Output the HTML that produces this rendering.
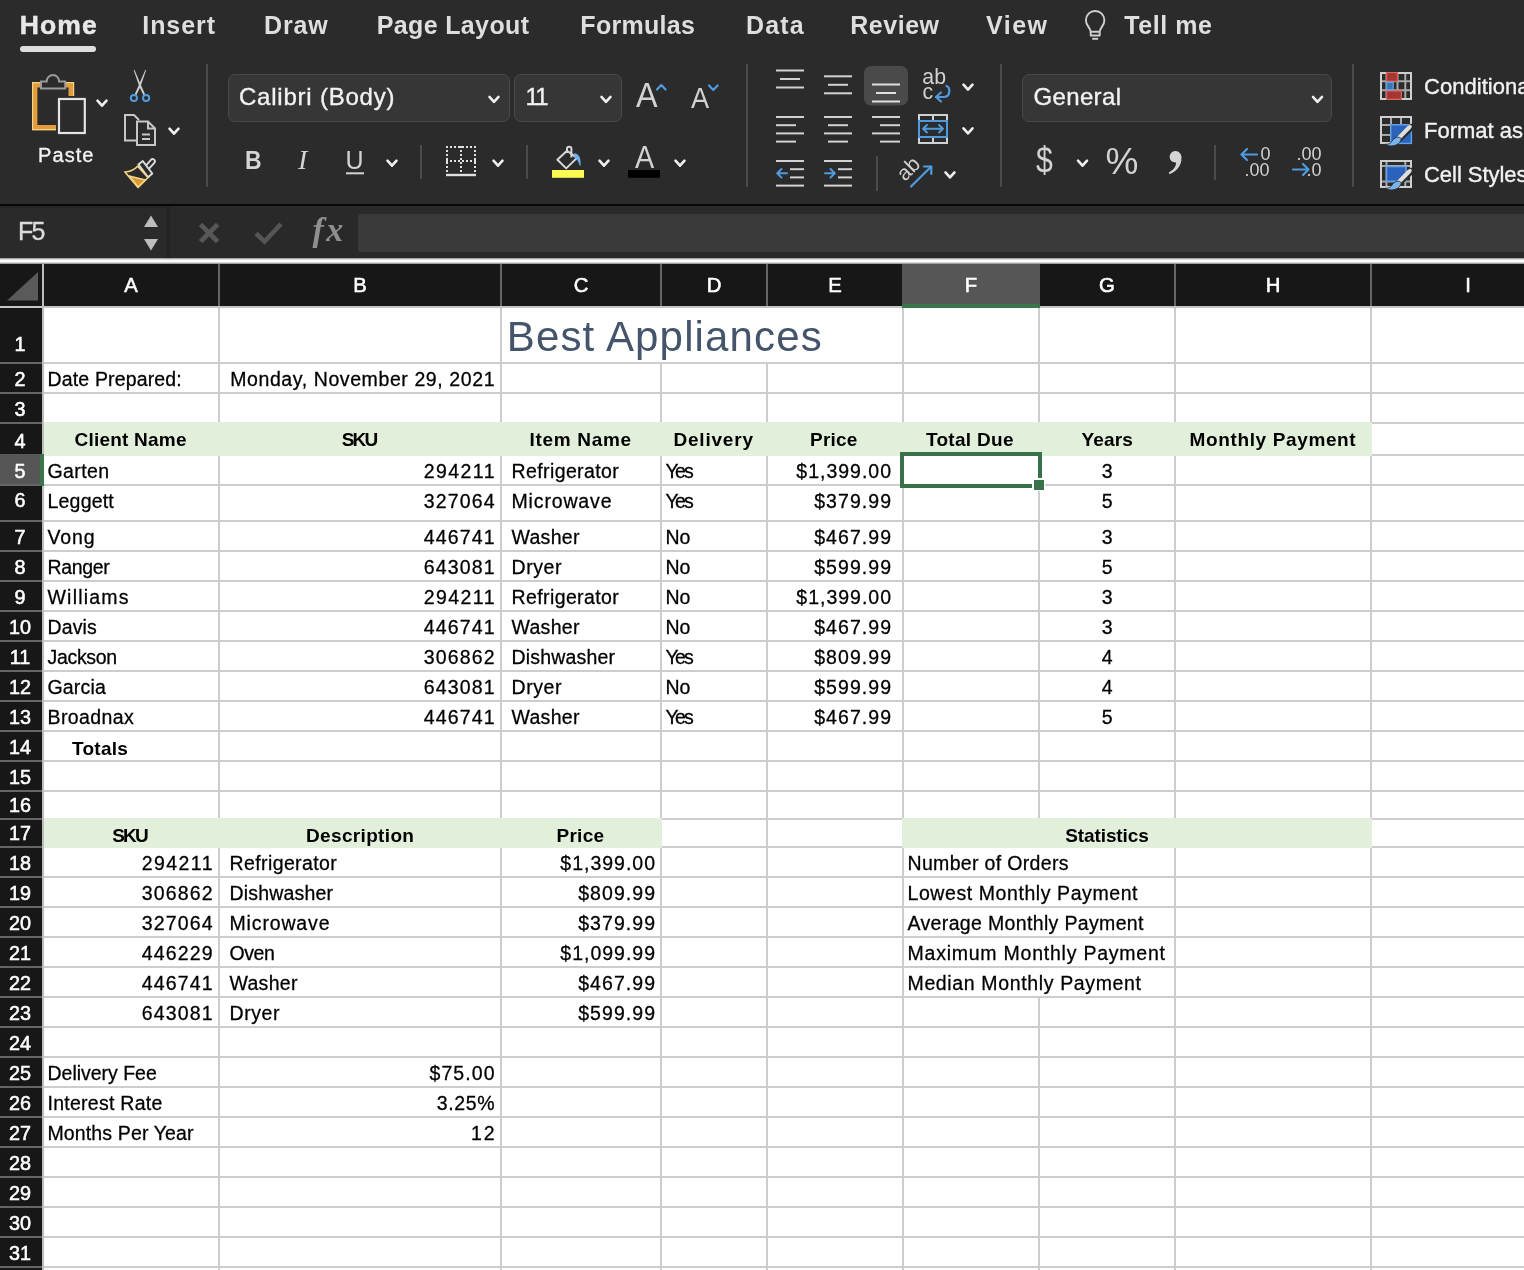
<!DOCTYPE html>
<html lang="en"><head><meta charset="utf-8"><title>Excel</title>
<style>
html,body{margin:0;padding:0;background:#2b2b2b;}
html{overflow:hidden;width:1524px;height:1270px;}
body{width:1524px;height:1270px;overflow:hidden;position:relative;will-change:transform;font-family:"Liberation Sans",sans-serif;}
.b{position:absolute;}
.t{position:absolute;white-space:pre;line-height:1;color:#000;font-family:"Liberation Sans",sans-serif;}
.c{-webkit-text-stroke:0.28px #000;}
.cb{font-weight:bold;}
.title{color:#44546a;}
.h{color:#fff;-webkit-text-stroke:0.55px #fff;}
.tab{color:#dedede;font-weight:bold;}
.ui{color:#f2f2f2;-webkit-text-stroke:0.35px currentColor;}
.ic{color:#d2d2d2;}
.uib{color:#d4d4d4;font-weight:bold;}
.ser{font-family:"Liberation Serif",serif;font-style:italic;}
</style></head><body>
<div class="b" style="left:0;top:0;width:1524px;height:204px;background:#2b2b2b"></div>
<div class="b" style="left:0;top:204px;width:1524px;height:2.3px;background:#080808"></div>
<div class="b" style="left:0;top:206.3px;width:1524px;height:52px;background:#292929"></div>
<div class="b" style="left:0;top:206.3px;width:170px;height:2px;background:#252525"></div>
<div class="b" style="left:0;top:208.3px;width:166px;height:50px;background:#2a2a2a"></div>
<div class="b" style="left:166px;top:206.3px;width:4px;height:52px;background:#242424"></div>
<div class="b" style="left:358px;top:214px;width:1166px;height:38px;background:#3a3a3a;border-radius:2.5px 0 0 2.5px"></div>
<div class="b" style="left:0;top:257.5px;width:1524px;height:6.5px;background:linear-gradient(#7a7a7a 0,#d0d0d0 18%,#fdfdfd 42%,#f4f4f4 66%,#b4b4b4 88%,#6c6c6c 100%)"></div>
<div class="b" style="left:20px;top:46px;width:76px;height:5.5px;border-radius:3px;background:#dedede"></div>
<div class="b" style="left:228.0px;top:74.3px;width:281.7px;height:47.4px;box-sizing:border-box;background:#363636;border:1.5px solid #4a4a4a;border-radius:7px"></div>
<div class="b" style="left:514.3px;top:74.3px;width:107.5px;height:47.4px;box-sizing:border-box;background:#363636;border:1.5px solid #4a4a4a;border-radius:7px"></div>
<div class="b" style="left:1022.0px;top:74.3px;width:310.0px;height:47.4px;box-sizing:border-box;background:#363636;border:1.5px solid #4a4a4a;border-radius:7px"></div>
<svg class="b" style="left:0;top:0" width="1524" height="264" viewBox="0 0 1524 264">
<path d="M207 64V187" stroke="#4b4b4b" stroke-width="2"/>
<path d="M747 64V187" stroke="#4b4b4b" stroke-width="2"/>
<path d="M1001 64V187" stroke="#4b4b4b" stroke-width="2"/>
<path d="M1353 64V187" stroke="#4b4b4b" stroke-width="2"/>
<path d="M421 145V179" stroke="#4b4b4b" stroke-width="2"/>
<path d="M527 145V179" stroke="#4b4b4b" stroke-width="2"/>
<path d="M877 156V191" stroke="#4b4b4b" stroke-width="2"/>
<path d="M1215 145V180" stroke="#4b4b4b" stroke-width="2"/>
<path d="M97.50 100.70 l4.50 5.00 l4.50 -5.00" fill="none" stroke="#f0f0f0" stroke-width="2.60" stroke-linecap="round" stroke-linejoin="round"/>
<path d="M169.50 128.60 l4.50 5.00 l4.50 -5.00" fill="none" stroke="#f0f0f0" stroke-width="2.60" stroke-linecap="round" stroke-linejoin="round"/>
<path d="M489.50 96.90 l4.50 5.00 l4.50 -5.00" fill="none" stroke="#f0f0f0" stroke-width="2.60" stroke-linecap="round" stroke-linejoin="round"/>
<path d="M601.50 96.90 l4.50 5.00 l4.50 -5.00" fill="none" stroke="#f0f0f0" stroke-width="2.60" stroke-linecap="round" stroke-linejoin="round"/>
<path d="M387.50 160.70 l4.50 5.00 l4.50 -5.00" fill="none" stroke="#f0f0f0" stroke-width="2.60" stroke-linecap="round" stroke-linejoin="round"/>
<path d="M493.50 160.70 l4.50 5.00 l4.50 -5.00" fill="none" stroke="#f0f0f0" stroke-width="2.60" stroke-linecap="round" stroke-linejoin="round"/>
<path d="M599.50 160.70 l4.50 5.00 l4.50 -5.00" fill="none" stroke="#f0f0f0" stroke-width="2.60" stroke-linecap="round" stroke-linejoin="round"/>
<path d="M675.50 160.70 l4.50 5.00 l4.50 -5.00" fill="none" stroke="#f0f0f0" stroke-width="2.60" stroke-linecap="round" stroke-linejoin="round"/>
<path d="M963.50 84.60 l4.50 5.00 l4.50 -5.00" fill="none" stroke="#f0f0f0" stroke-width="2.60" stroke-linecap="round" stroke-linejoin="round"/>
<path d="M963.50 128.30 l4.50 5.00 l4.50 -5.00" fill="none" stroke="#f0f0f0" stroke-width="2.60" stroke-linecap="round" stroke-linejoin="round"/>
<path d="M945.50 172.40 l4.50 5.00 l4.50 -5.00" fill="none" stroke="#f0f0f0" stroke-width="2.60" stroke-linecap="round" stroke-linejoin="round"/>
<path d="M1078.00 160.70 l4.50 5.00 l4.50 -5.00" fill="none" stroke="#f0f0f0" stroke-width="2.60" stroke-linecap="round" stroke-linejoin="round"/>
<path d="M1313.00 96.90 l4.50 5.00 l4.50 -5.00" fill="none" stroke="#f0f0f0" stroke-width="2.60" stroke-linecap="round" stroke-linejoin="round"/>
<g fill="none" stroke="#d0d0d0" stroke-width="1.9" stroke-linejoin="round"><path d="M1090.7 31.8 C1090.7 27.6 1085.9 26.2 1085.9 20.2 A9.25 9.25 0 0 1 1104.4 20.2 C1104.4 26.2 1099.7 27.6 1099.7 31.8 Z"/><path d="M1090.7 31.8 V35.5 H1099.7 V31.8"/><path d="M1092.2 38.8 H1098.1" stroke-width="2"/></g>
<g><path d="M44 84.7H34.7V127.6H56" fill="none" stroke="#e39c3b" stroke-width="5.4"/><path d="M62 84.7H71.2V96" fill="none" stroke="#e39c3b" stroke-width="5.4"/><path d="M44 82.6H32.6V129.7H56M62 82.6H73.6V96" fill="none" stroke="#f6d487" stroke-width="1.2"/><path d="M41 88.6V81.6H46.7 A6.2 6.6 0 0 1 59.1 81.6H65.2V88.6Z" fill="#2b2b2b" stroke="#9a9a9a" stroke-width="2"/><rect x="59" y="99" width="25.8" height="34" fill="#2b2b2b" stroke="#e4e4e4" stroke-width="2.2"/></g>
<g><path d="M133.7 70.2 L134.6 70 L141.6 86.5 L145.2 94.6 L143.6 95.4 L139.4 86.8 Z" fill="#cdcdcd"/><path d="M146.1 70.2 L145.2 70 L138.2 86.5 L134.6 94.6 L136.2 95.4 L140.4 86.8 Z" fill="#cdcdcd"/><circle cx="133.9" cy="98" r="3.1" fill="none" stroke="#4f9be0" stroke-width="2"/><circle cx="146.1" cy="98" r="3.1" fill="none" stroke="#4f9be0" stroke-width="2"/></g>
<g fill="none" stroke="#c8c8c8" stroke-width="2" stroke-linejoin="miter"><path d="M136 140.5H125V115H134L139 120"/><path d="M137 121.5H148L155 128.5V145H137Z" fill="#2b2b2b"/><path d="M148 121.5V128.5H155"/><path d="M142 134.5H150M142 139H150" stroke-width="1.8"/></g>
<g stroke-linejoin="round"><path d="M147.6 167 L152.6 161.3" stroke="#dcdcdc" stroke-width="6.4" stroke-linecap="round" fill="none"/><path d="M147.6 167 L152.6 161.3" stroke="#2b2b2b" stroke-width="2.6" stroke-linecap="round" fill="none"/><path d="M138.4 164.4 L142.8 161.1 L152.3 173.5 L148.1 177.3 Z" fill="#2b2b2b" stroke="#dcdcdc" stroke-width="1.9"/><path d="M124.9 172 Q133 171.3 137.6 166.2 L148 177.5 L138.1 187.4 Z" fill="#2b2b2b" stroke="#f4d486" stroke-width="1.7"/><path d="M129.2 176 L145.4 180 L138.1 187 Z" fill="#df9636" stroke="#f4d486" stroke-width="1.5"/></g>
<path d="M657 89.5 l4.3 -4.5 l4.3 4.5" fill="none" stroke="#4f9be0" stroke-width="2.2" stroke-linecap="round" stroke-linejoin="round"/>
<path d="M709 85.5 l4.3 4.5 l4.3 -4.5" fill="none" stroke="#4f9be0" stroke-width="2.2" stroke-linecap="round" stroke-linejoin="round"/>
<path d="M346.00 173.30H364.00" stroke="#d4d4d4" stroke-width="2.00" fill="none"/>
<g fill="none" stroke="#e0e0e0" stroke-width="2"><path d="M446 147H476M446 161H476" stroke-dasharray="2 2"/><path d="M447 146V174M461 146V174M475 146V174" stroke-dasharray="2 2"/><path d="M446 175H476" stroke-width="2.4"/></g>
<g fill="none" stroke="#d8d8d8" stroke-width="2" stroke-linejoin="round"><path d="M567 150.8 L557.4 159.8 L566.2 168.4 L577 157.9 Z"/><path d="M567 153 V148.6 Q567 146.7 569.2 146.7 Q571.4 146.7 571.4 148.6 V157.6"/></g><path d="M574.6 153.6 Q580.8 154.2 580.2 165.4 Q578.4 159.6 574.8 157.6 Z" fill="#6eb0ee" stroke="#6eb0ee" stroke-width="0.8"/>
<rect x="552" y="170" width="32" height="7.8" fill="#fbfb52"/>
<rect x="628" y="170" width="32" height="7.8" fill="#000"/>
<path d="M776.00 70.50H804.00" stroke="#d2d2d2" stroke-width="2.00" fill="none"/><path d="M780.00 79.00H800.00" stroke="#d2d2d2" stroke-width="2.00" fill="none"/><path d="M776.00 87.50H804.00" stroke="#d2d2d2" stroke-width="2.00" fill="none"/>
<path d="M824.00 76.30H852.00" stroke="#d2d2d2" stroke-width="2.00" fill="none"/><path d="M828.00 84.80H848.00" stroke="#d2d2d2" stroke-width="2.00" fill="none"/><path d="M824.00 93.30H852.00" stroke="#d2d2d2" stroke-width="2.00" fill="none"/>
<rect x="864" y="66" width="44" height="39.5" rx="7" fill="#4a4a4a"/>
<path d="M872.00 84.50H900.00" stroke="#e0e0e0" stroke-width="2.00" fill="none"/><path d="M876.00 93.00H896.00" stroke="#e0e0e0" stroke-width="2.00" fill="none"/><path d="M872.00 101.50H900.00" stroke="#e0e0e0" stroke-width="2.00" fill="none"/>
<path d="M776.00 117.00H804.00" stroke="#d2d2d2" stroke-width="2.00" fill="none"/><path d="M776.00 125.20H796.00" stroke="#d2d2d2" stroke-width="2.00" fill="none"/><path d="M776.00 133.40H804.00" stroke="#d2d2d2" stroke-width="2.00" fill="none"/><path d="M776.00 141.60H796.00" stroke="#d2d2d2" stroke-width="2.00" fill="none"/>
<path d="M824.00 117.00H852.00" stroke="#d2d2d2" stroke-width="2.00" fill="none"/><path d="M828.00 125.20H848.00" stroke="#d2d2d2" stroke-width="2.00" fill="none"/><path d="M824.00 133.40H852.00" stroke="#d2d2d2" stroke-width="2.00" fill="none"/><path d="M828.00 141.60H848.00" stroke="#d2d2d2" stroke-width="2.00" fill="none"/>
<path d="M872.00 117.00H900.00" stroke="#d2d2d2" stroke-width="2.00" fill="none"/><path d="M880.00 125.20H900.00" stroke="#d2d2d2" stroke-width="2.00" fill="none"/><path d="M872.00 133.40H900.00" stroke="#d2d2d2" stroke-width="2.00" fill="none"/><path d="M880.00 141.60H900.00" stroke="#d2d2d2" stroke-width="2.00" fill="none"/>
<path d="M776.00 161.00H804.00" stroke="#d2d2d2" stroke-width="2.00" fill="none"/><path d="M790.00 169.20H804.00" stroke="#d2d2d2" stroke-width="2.00" fill="none"/><path d="M790.00 177.40H804.00" stroke="#d2d2d2" stroke-width="2.00" fill="none"/><path d="M776.00 185.60H804.00" stroke="#d2d2d2" stroke-width="2.00" fill="none"/>
<path d="M824.00 161.00H852.00" stroke="#d2d2d2" stroke-width="2.00" fill="none"/><path d="M838.00 169.20H852.00" stroke="#d2d2d2" stroke-width="2.00" fill="none"/><path d="M838.00 177.40H852.00" stroke="#d2d2d2" stroke-width="2.00" fill="none"/><path d="M824.00 185.60H852.00" stroke="#d2d2d2" stroke-width="2.00" fill="none"/>
<g fill="none" stroke="#4f9be0" stroke-width="2" stroke-linecap="round" stroke-linejoin="round"><path d="M777.5 173.3H787M781.5 169l-4.3 4.3l4.3 4.3"/><path d="M825 173.3H834.5M830.5 169l4.3 4.3l-4.3 4.3"/></g>
<g fill="none" stroke="#4f9be0" stroke-width="2.2" stroke-linecap="round" stroke-linejoin="round"><path d="M946.5 86 C951 88 950 97 944 97 H936"/><path d="M941 92.5 l-5 4.5 l5 4.5"/></g>
<g fill="none" stroke-width="2"><path d="M919 115H947V143H919Z M933 115V121 M933 137V143" stroke="#d2d2d2"/><rect x="919" y="121" width="28" height="16" stroke="#4f9be0"/><path d="M923 128.7H943M927 125l-4 3.7l4 3.7M939 125l4 3.7l-4 3.7" stroke="#4f9be0" stroke-linecap="round" stroke-linejoin="round"/></g>
<g fill="none" stroke="#4f9be0" stroke-width="2.2" stroke-linecap="round" stroke-linejoin="round"><path d="M911 186.5 L931 166.7"/><path d="M924 166.5 H931.3 V174"/></g>
<g fill="none" stroke="#4f9be0" stroke-width="2.2" stroke-linecap="round" stroke-linejoin="round"><path d="M1241.5 154.5H1257M1247 149l-5.5 5.5l5.5 5.5"/><path d="M1293 169.5H1308.5M1303 164l5.5 5.5l-5.5 5.5"/></g>
<path d="M1175.5 151 a5.8 5.8 0 1 1 -0.1 0 Z" fill="#d4d4d4"/><path d="M1180.8 154 C1183.5 163 1178 171 1169.5 174.2 L1168.8 172.5 C1174 169.5 1176.5 166 1176 161.5 Z" fill="#d4d4d4"/>
<g fill="none" stroke-width="2"><path d="M1386.5 72.0V100.0M1397.5 72.0V100.0M1405.3 72.0V100.0M1380 81.3H1412M1380 90.3H1412" stroke="#a9a9a9"/><rect x="1381" y="73.0" width="30" height="26" stroke="#cfcfcf"/></g>
<rect x="1386.6" y="72.6" width="10.8" height="8.6" fill="#a63431" stroke="#d8645e" stroke-width="1.2"/><rect x="1386.6" y="90.9" width="14.8" height="8.4" fill="#a63431" stroke="#d8645e" stroke-width="1.2"/><rect x="1386.6" y="82.4" width="6.6" height="7.3" fill="#3b74b8" stroke="#64a6e6" stroke-width="1.2"/>
<g fill="none" stroke-width="2"><path d="M1391.0 116.0V144.0M1401.0 116.0V144.0M1380 125.0H1412M1380 135.0H1412" stroke="#a9a9a9"/><rect x="1381" y="117.0" width="30" height="26" stroke="#cfcfcf"/></g>
<rect x="1390.8" y="124.8" width="20.6" height="18.6" fill="#2b62bb" stroke="#5fa3e8" stroke-width="1.4"/>
<path d="M1411.6 127.0 L1398.5 139.5" stroke="#2b2b2b" stroke-width="6.2" stroke-linecap="round"/><path d="M1411.2 125.6 Q1412.2 127.0 1410 129.2 L1399.6 139.8 L1396.8 137.5 L1407.5 126.4 Q1410.3 124.6 1411.2 125.6 Z" fill="#dedede" stroke="#f4f4f4" stroke-width="0.6"/><path d="M1399.5 137.3 C1397 136.7 1393.5 138.2 1392 141.0 C1390.5 143.8 1388 144.6 1385.3 144.2 C1390 147.4 1398.5 146.0 1400.6 140.8 C1401.6 139.0 1401 137.8 1399.5 137.3 Z" fill="#79b4ee" stroke="#2b2b2b" stroke-width="0.8"/>
<g fill="none" stroke-width="2"><path d="M1386.5 160.0V188.0M1405.3 160.0V188.0M1380 166.0H1412M1380 181.5H1412" stroke="#a9a9a9"/><rect x="1381" y="161.0" width="30" height="26" stroke="#cfcfcf"/></g>
<rect x="1386.6" y="166.6" width="19.4" height="14.6" fill="#2b62bb" stroke="#5fa3e8" stroke-width="1.4"/>
<path d="M1411.6 171.0 L1398.5 183.5" stroke="#2b2b2b" stroke-width="6.2" stroke-linecap="round"/><path d="M1411.2 169.6 Q1412.2 171.0 1410 173.2 L1399.6 183.8 L1396.8 181.5 L1407.5 170.4 Q1410.3 168.6 1411.2 169.6 Z" fill="#dedede" stroke="#f4f4f4" stroke-width="0.6"/><path d="M1399.5 181.3 C1397 180.7 1393.5 182.2 1392 185.0 C1390.5 187.8 1388 188.6 1385.3 188.2 C1390 191.4 1398.5 190.0 1400.6 184.8 C1401.6 183.0 1401 181.8 1399.5 181.3 Z" fill="#79b4ee" stroke="#2b2b2b" stroke-width="0.8"/>
<path d="M151 215.5 L158 227 H144 Z" fill="#bdbdbd"/><path d="M151 250.5 L158 239 H144 Z" fill="#bdbdbd"/>
<path d="M200.6 224.4 L217.6 241.6 M217.6 224.4 L200.6 241.6" stroke="#575757" stroke-width="4.9" fill="none"/>
<path d="M256 233.5 L264.5 241.5 L281 224" stroke="#555" stroke-width="4.6" fill="none"/>
</svg>
<div class="b" style="left:44px;top:308px;width:1480px;height:962px;background:#fff"></div>
<div class="b" style="left:0;top:264px;width:1524px;height:42px;background:#171717"></div>
<div class="b" style="left:0;top:306px;width:42px;height:964px;background:#171717"></div>
<div class="b" style="left:0;top:305.5px;width:1524px;height:2px;background:#c4c4c4"></div>
<div class="b" style="left:42px;top:264px;width:2px;height:1006px;background:#bdbdbd"></div>
<div class="b" style="left:218px;top:308px;width:2px;height:962px;background:#cdcdcd"></div>
<div class="b" style="left:218px;top:264px;width:2px;height:42px;background:#666666"></div>
<div class="b" style="left:500px;top:308px;width:2px;height:962px;background:#cdcdcd"></div>
<div class="b" style="left:500px;top:264px;width:2px;height:42px;background:#666666"></div>
<div class="b" style="left:660px;top:308px;width:2px;height:962px;background:#cdcdcd"></div>
<div class="b" style="left:660px;top:264px;width:2px;height:42px;background:#666666"></div>
<div class="b" style="left:766px;top:308px;width:2px;height:962px;background:#cdcdcd"></div>
<div class="b" style="left:766px;top:264px;width:2px;height:42px;background:#666666"></div>
<div class="b" style="left:902px;top:308px;width:2px;height:962px;background:#cdcdcd"></div>
<div class="b" style="left:902px;top:264px;width:2px;height:42px;background:#666666"></div>
<div class="b" style="left:1038px;top:308px;width:2px;height:962px;background:#cdcdcd"></div>
<div class="b" style="left:1038px;top:264px;width:2px;height:42px;background:#666666"></div>
<div class="b" style="left:1174px;top:308px;width:2px;height:962px;background:#cdcdcd"></div>
<div class="b" style="left:1174px;top:264px;width:2px;height:42px;background:#666666"></div>
<div class="b" style="left:1370px;top:308px;width:2px;height:962px;background:#cdcdcd"></div>
<div class="b" style="left:1370px;top:264px;width:2px;height:42px;background:#666666"></div>
<div class="b" style="left:44px;top:362px;width:1480px;height:2px;background:#cdcdcd"></div>
<div class="b" style="left:0;top:362px;width:42px;height:2px;background:#666666"></div>
<div class="b" style="left:44px;top:392px;width:1480px;height:2px;background:#cdcdcd"></div>
<div class="b" style="left:0;top:392px;width:42px;height:2px;background:#666666"></div>
<div class="b" style="left:44px;top:422px;width:1480px;height:2px;background:#cdcdcd"></div>
<div class="b" style="left:0;top:422px;width:42px;height:2px;background:#666666"></div>
<div class="b" style="left:44px;top:454px;width:1480px;height:2px;background:#cdcdcd"></div>
<div class="b" style="left:0;top:454px;width:42px;height:2px;background:#666666"></div>
<div class="b" style="left:44px;top:484px;width:1480px;height:2px;background:#cdcdcd"></div>
<div class="b" style="left:0;top:484px;width:42px;height:2px;background:#666666"></div>
<div class="b" style="left:44px;top:520px;width:1480px;height:2px;background:#cdcdcd"></div>
<div class="b" style="left:0;top:520px;width:42px;height:2px;background:#666666"></div>
<div class="b" style="left:44px;top:550px;width:1480px;height:2px;background:#cdcdcd"></div>
<div class="b" style="left:0;top:550px;width:42px;height:2px;background:#666666"></div>
<div class="b" style="left:44px;top:580px;width:1480px;height:2px;background:#cdcdcd"></div>
<div class="b" style="left:0;top:580px;width:42px;height:2px;background:#666666"></div>
<div class="b" style="left:44px;top:610px;width:1480px;height:2px;background:#cdcdcd"></div>
<div class="b" style="left:0;top:610px;width:42px;height:2px;background:#666666"></div>
<div class="b" style="left:44px;top:640px;width:1480px;height:2px;background:#cdcdcd"></div>
<div class="b" style="left:0;top:640px;width:42px;height:2px;background:#666666"></div>
<div class="b" style="left:44px;top:670px;width:1480px;height:2px;background:#cdcdcd"></div>
<div class="b" style="left:0;top:670px;width:42px;height:2px;background:#666666"></div>
<div class="b" style="left:44px;top:700px;width:1480px;height:2px;background:#cdcdcd"></div>
<div class="b" style="left:0;top:700px;width:42px;height:2px;background:#666666"></div>
<div class="b" style="left:44px;top:730px;width:1480px;height:2px;background:#cdcdcd"></div>
<div class="b" style="left:0;top:730px;width:42px;height:2px;background:#666666"></div>
<div class="b" style="left:44px;top:760px;width:1480px;height:2px;background:#cdcdcd"></div>
<div class="b" style="left:0;top:760px;width:42px;height:2px;background:#666666"></div>
<div class="b" style="left:44px;top:790px;width:1480px;height:2px;background:#cdcdcd"></div>
<div class="b" style="left:0;top:790px;width:42px;height:2px;background:#666666"></div>
<div class="b" style="left:44px;top:818px;width:1480px;height:2px;background:#cdcdcd"></div>
<div class="b" style="left:0;top:818px;width:42px;height:2px;background:#666666"></div>
<div class="b" style="left:44px;top:846px;width:1480px;height:2px;background:#cdcdcd"></div>
<div class="b" style="left:0;top:846px;width:42px;height:2px;background:#666666"></div>
<div class="b" style="left:44px;top:876px;width:1480px;height:2px;background:#cdcdcd"></div>
<div class="b" style="left:0;top:876px;width:42px;height:2px;background:#666666"></div>
<div class="b" style="left:44px;top:906px;width:1480px;height:2px;background:#cdcdcd"></div>
<div class="b" style="left:0;top:906px;width:42px;height:2px;background:#666666"></div>
<div class="b" style="left:44px;top:936px;width:1480px;height:2px;background:#cdcdcd"></div>
<div class="b" style="left:0;top:936px;width:42px;height:2px;background:#666666"></div>
<div class="b" style="left:44px;top:966px;width:1480px;height:2px;background:#cdcdcd"></div>
<div class="b" style="left:0;top:966px;width:42px;height:2px;background:#666666"></div>
<div class="b" style="left:44px;top:996px;width:1480px;height:2px;background:#cdcdcd"></div>
<div class="b" style="left:0;top:996px;width:42px;height:2px;background:#666666"></div>
<div class="b" style="left:44px;top:1026px;width:1480px;height:2px;background:#cdcdcd"></div>
<div class="b" style="left:0;top:1026px;width:42px;height:2px;background:#666666"></div>
<div class="b" style="left:44px;top:1056px;width:1480px;height:2px;background:#cdcdcd"></div>
<div class="b" style="left:0;top:1056px;width:42px;height:2px;background:#666666"></div>
<div class="b" style="left:44px;top:1086px;width:1480px;height:2px;background:#cdcdcd"></div>
<div class="b" style="left:0;top:1086px;width:42px;height:2px;background:#666666"></div>
<div class="b" style="left:44px;top:1116px;width:1480px;height:2px;background:#cdcdcd"></div>
<div class="b" style="left:0;top:1116px;width:42px;height:2px;background:#666666"></div>
<div class="b" style="left:44px;top:1146px;width:1480px;height:2px;background:#cdcdcd"></div>
<div class="b" style="left:0;top:1146px;width:42px;height:2px;background:#666666"></div>
<div class="b" style="left:44px;top:1176px;width:1480px;height:2px;background:#cdcdcd"></div>
<div class="b" style="left:0;top:1176px;width:42px;height:2px;background:#666666"></div>
<div class="b" style="left:44px;top:1206px;width:1480px;height:2px;background:#cdcdcd"></div>
<div class="b" style="left:0;top:1206px;width:42px;height:2px;background:#666666"></div>
<div class="b" style="left:44px;top:1236px;width:1480px;height:2px;background:#cdcdcd"></div>
<div class="b" style="left:0;top:1236px;width:42px;height:2px;background:#666666"></div>
<div class="b" style="left:44px;top:1266px;width:1480px;height:2px;background:#cdcdcd"></div>
<div class="b" style="left:0;top:1266px;width:42px;height:2px;background:#666666"></div>
<div class="b" style="left:1038px;top:848px;width:2px;height:28px;background:#fff"></div>
<div class="b" style="left:1038px;top:878px;width:2px;height:28px;background:#fff"></div>
<div class="b" style="left:1038px;top:908px;width:2px;height:28px;background:#fff"></div>
<div class="b" style="left:1038px;top:938px;width:2px;height:28px;background:#fff"></div>
<div class="b" style="left:1038px;top:968px;width:2px;height:28px;background:#fff"></div>
<div class="b" style="left:502px;top:308px;width:400px;height:54px;background:#fff"></div>
<div class="b" style="left:44px;top:422px;width:1328px;height:34px;background:#e2efda"></div>
<div class="b" style="left:44px;top:818px;width:618px;height:30px;background:#e2efda"></div>
<div class="b" style="left:902px;top:818px;width:470px;height:30px;background:#e2efda"></div>
<div class="b" style="left:902px;top:264px;width:138px;height:40px;background:#565656"></div>
<div class="b" style="left:902px;top:303.5px;width:138px;height:4px;background:#38764c"></div>
<div class="b" style="left:0;top:454px;width:40px;height:30px;background:#565656"></div>
<div class="b" style="left:40px;top:454px;width:4px;height:32px;background:#38764c"></div>
<div class="b" style="left:900px;top:452px;width:142px;height:36px;border:4px solid #38724a;box-sizing:border-box"></div>
<div class="b" style="left:1032px;top:478px;width:13px;height:13px;background:#fff"></div>
<div class="b" style="left:1034px;top:480px;width:10px;height:10px;background:#38724a"></div>
<svg class="b" style="left:0;top:264px" width="42" height="42"><path d="M38 8 L38 36.5 L7 36.5 Z" fill="#5a5a5a"/></svg>
<div class="t title" style="top:315.95px;font-size:42px;letter-spacing:1.151px;left:506.80px;">Best Appliances</div>
<div class="t c" style="top:370.39px;font-size:19.5px;letter-spacing:0.157px;left:47.50px;">Date Prepared:</div>
<div class="t c" style="top:370.39px;font-size:19.5px;letter-spacing:0.594px;right:1028.91px;">Monday, November 29, 2021</div>
<div class="t cb" style="top:429.72px;font-size:19px;letter-spacing:0.224px;left:130.61px;width:0;display:flex;justify-content:center;"><span>Client Name</span></div>
<div class="t cb" style="top:429.72px;font-size:19px;letter-spacing:-1.798px;left:359.10px;width:0;display:flex;justify-content:center;"><span>SKU</span></div>
<div class="t cb" style="top:429.72px;font-size:19px;letter-spacing:0.671px;left:580.64px;width:0;display:flex;justify-content:center;"><span>Item Name</span></div>
<div class="t cb" style="top:429.72px;font-size:19px;letter-spacing:0.807px;left:713.60px;width:0;display:flex;justify-content:center;"><span>Delivery</span></div>
<div class="t cb" style="top:429.72px;font-size:19px;letter-spacing:0.252px;left:833.83px;width:0;display:flex;justify-content:center;"><span>Price</span></div>
<div class="t cb" style="top:429.72px;font-size:19px;letter-spacing:0.293px;left:969.85px;width:0;display:flex;justify-content:center;"><span>Total Due</span></div>
<div class="t cb" style="top:429.72px;font-size:19px;letter-spacing:0.143px;left:1107.27px;width:0;display:flex;justify-content:center;"><span>Years</span></div>
<div class="t cb" style="top:429.72px;font-size:19px;letter-spacing:0.635px;left:1272.92px;width:0;display:flex;justify-content:center;"><span>Monthly Payment</span></div>
<div class="t c" style="top:462.39px;font-size:19.5px;letter-spacing:0.416px;left:47.50px;">Garten</div>
<div class="t c" style="top:462.39px;font-size:19.5px;letter-spacing:1.403px;right:1028.10px;">294211</div>
<div class="t c" style="top:462.39px;font-size:19.5px;letter-spacing:0.394px;left:511.50px;">Refrigerator</div>
<div class="t c" style="top:462.39px;font-size:19.5px;letter-spacing:-1.800px;left:665.50px;">Yes</div>
<div class="t c" style="top:462.39px;font-size:19.5px;letter-spacing:0.991px;right:632.01px;">$1,399.00</div>
<div class="t c" style="top:462.39px;font-size:19.5px;letter-spacing:0.857px;left:1107.63px;width:0;display:flex;justify-content:center;"><span>3</span></div>
<div class="t c" style="top:491.89px;font-size:19.5px;letter-spacing:0.205px;left:47.50px;">Leggett</div>
<div class="t c" style="top:491.89px;font-size:19.5px;letter-spacing:1.114px;right:1028.39px;">327064</div>
<div class="t c" style="top:491.89px;font-size:19.5px;letter-spacing:0.851px;left:511.50px;">Microwave</div>
<div class="t c" style="top:491.89px;font-size:19.5px;letter-spacing:-1.800px;left:665.50px;">Yes</div>
<div class="t c" style="top:491.89px;font-size:19.5px;letter-spacing:1.052px;right:631.95px;">$379.99</div>
<div class="t c" style="top:491.89px;font-size:19.5px;letter-spacing:0.857px;left:1107.63px;width:0;display:flex;justify-content:center;"><span>5</span></div>
<div class="t c" style="top:528.39px;font-size:19.5px;letter-spacing:0.908px;left:47.50px;">Vong</div>
<div class="t c" style="top:528.39px;font-size:19.5px;letter-spacing:1.114px;right:1028.39px;">446741</div>
<div class="t c" style="top:528.39px;font-size:19.5px;letter-spacing:0.285px;left:511.50px;">Washer</div>
<div class="t c" style="top:528.39px;font-size:19.5px;letter-spacing:-0.031px;left:665.50px;">No</div>
<div class="t c" style="top:528.39px;font-size:19.5px;letter-spacing:1.052px;right:631.95px;">$467.99</div>
<div class="t c" style="top:528.39px;font-size:19.5px;letter-spacing:0.857px;left:1107.63px;width:0;display:flex;justify-content:center;"><span>3</span></div>
<div class="t c" style="top:558.39px;font-size:19.5px;letter-spacing:-0.353px;left:47.50px;">Ranger</div>
<div class="t c" style="top:558.39px;font-size:19.5px;letter-spacing:1.114px;right:1028.39px;">643081</div>
<div class="t c" style="top:558.39px;font-size:19.5px;letter-spacing:0.580px;left:511.50px;">Dryer</div>
<div class="t c" style="top:558.39px;font-size:19.5px;letter-spacing:-0.031px;left:665.50px;">No</div>
<div class="t c" style="top:558.39px;font-size:19.5px;letter-spacing:1.052px;right:631.95px;">$599.99</div>
<div class="t c" style="top:558.39px;font-size:19.5px;letter-spacing:0.857px;left:1107.63px;width:0;display:flex;justify-content:center;"><span>5</span></div>
<div class="t c" style="top:588.39px;font-size:19.5px;letter-spacing:1.202px;left:47.50px;">Williams</div>
<div class="t c" style="top:588.39px;font-size:19.5px;letter-spacing:1.403px;right:1028.10px;">294211</div>
<div class="t c" style="top:588.39px;font-size:19.5px;letter-spacing:0.394px;left:511.50px;">Refrigerator</div>
<div class="t c" style="top:588.39px;font-size:19.5px;letter-spacing:-0.031px;left:665.50px;">No</div>
<div class="t c" style="top:588.39px;font-size:19.5px;letter-spacing:0.991px;right:632.01px;">$1,399.00</div>
<div class="t c" style="top:588.39px;font-size:19.5px;letter-spacing:0.857px;left:1107.63px;width:0;display:flex;justify-content:center;"><span>3</span></div>
<div class="t c" style="top:618.39px;font-size:19.5px;letter-spacing:0.108px;left:47.50px;">Davis</div>
<div class="t c" style="top:618.39px;font-size:19.5px;letter-spacing:1.114px;right:1028.39px;">446741</div>
<div class="t c" style="top:618.39px;font-size:19.5px;letter-spacing:0.285px;left:511.50px;">Washer</div>
<div class="t c" style="top:618.39px;font-size:19.5px;letter-spacing:-0.031px;left:665.50px;">No</div>
<div class="t c" style="top:618.39px;font-size:19.5px;letter-spacing:1.052px;right:631.95px;">$467.99</div>
<div class="t c" style="top:618.39px;font-size:19.5px;letter-spacing:0.857px;left:1107.63px;width:0;display:flex;justify-content:center;"><span>3</span></div>
<div class="t c" style="top:648.39px;font-size:19.5px;letter-spacing:-0.306px;left:47.50px;">Jackson</div>
<div class="t c" style="top:648.39px;font-size:19.5px;letter-spacing:1.114px;right:1028.39px;">306862</div>
<div class="t c" style="top:648.39px;font-size:19.5px;letter-spacing:0.180px;left:511.50px;">Dishwasher</div>
<div class="t c" style="top:648.39px;font-size:19.5px;letter-spacing:-1.800px;left:665.50px;">Yes</div>
<div class="t c" style="top:648.39px;font-size:19.5px;letter-spacing:1.052px;right:631.95px;">$809.99</div>
<div class="t c" style="top:648.39px;font-size:19.5px;letter-spacing:0.857px;left:1107.63px;width:0;display:flex;justify-content:center;"><span>4</span></div>
<div class="t c" style="top:678.39px;font-size:19.5px;letter-spacing:0.171px;left:47.50px;">Garcia</div>
<div class="t c" style="top:678.39px;font-size:19.5px;letter-spacing:1.114px;right:1028.39px;">643081</div>
<div class="t c" style="top:678.39px;font-size:19.5px;letter-spacing:0.580px;left:511.50px;">Dryer</div>
<div class="t c" style="top:678.39px;font-size:19.5px;letter-spacing:-0.031px;left:665.50px;">No</div>
<div class="t c" style="top:678.39px;font-size:19.5px;letter-spacing:1.052px;right:631.95px;">$599.99</div>
<div class="t c" style="top:678.39px;font-size:19.5px;letter-spacing:0.857px;left:1107.63px;width:0;display:flex;justify-content:center;"><span>4</span></div>
<div class="t c" style="top:708.39px;font-size:19.5px;letter-spacing:0.401px;left:47.50px;">Broadnax</div>
<div class="t c" style="top:708.39px;font-size:19.5px;letter-spacing:1.114px;right:1028.39px;">446741</div>
<div class="t c" style="top:708.39px;font-size:19.5px;letter-spacing:0.285px;left:511.50px;">Washer</div>
<div class="t c" style="top:708.39px;font-size:19.5px;letter-spacing:-1.800px;left:665.50px;">Yes</div>
<div class="t c" style="top:708.39px;font-size:19.5px;letter-spacing:1.052px;right:631.95px;">$467.99</div>
<div class="t c" style="top:708.39px;font-size:19.5px;letter-spacing:0.857px;left:1107.63px;width:0;display:flex;justify-content:center;"><span>5</span></div>
<div class="t cb" style="top:738.82px;font-size:19px;letter-spacing:0.250px;left:72.00px;">Totals</div>
<div class="t cb" style="top:825.92px;font-size:19px;letter-spacing:-1.798px;left:129.60px;width:0;display:flex;justify-content:center;"><span>SKU</span></div>
<div class="t cb" style="top:825.92px;font-size:19px;letter-spacing:0.347px;left:360.17px;width:0;display:flex;justify-content:center;"><span>Description</span></div>
<div class="t cb" style="top:825.92px;font-size:19px;letter-spacing:0.252px;left:580.43px;width:0;display:flex;justify-content:center;"><span>Price</span></div>
<div class="t cb" style="top:825.92px;font-size:19px;letter-spacing:-0.109px;left:1106.95px;width:0;display:flex;justify-content:center;"><span>Statistics</span></div>
<div class="t c" style="top:854.39px;font-size:19.5px;letter-spacing:1.403px;right:1310.10px;">294211</div>
<div class="t c" style="top:854.39px;font-size:19.5px;letter-spacing:0.394px;left:229.50px;">Refrigerator</div>
<div class="t c" style="top:854.39px;font-size:19.5px;letter-spacing:0.991px;right:868.01px;">$1,399.00</div>
<div class="t c" style="top:884.39px;font-size:19.5px;letter-spacing:1.114px;right:1310.39px;">306862</div>
<div class="t c" style="top:884.39px;font-size:19.5px;letter-spacing:0.180px;left:229.50px;">Dishwasher</div>
<div class="t c" style="top:884.39px;font-size:19.5px;letter-spacing:1.052px;right:867.95px;">$809.99</div>
<div class="t c" style="top:914.39px;font-size:19.5px;letter-spacing:1.114px;right:1310.39px;">327064</div>
<div class="t c" style="top:914.39px;font-size:19.5px;letter-spacing:0.851px;left:229.50px;">Microwave</div>
<div class="t c" style="top:914.39px;font-size:19.5px;letter-spacing:1.052px;right:867.95px;">$379.99</div>
<div class="t c" style="top:944.39px;font-size:19.5px;letter-spacing:1.114px;right:1310.39px;">446229</div>
<div class="t c" style="top:944.39px;font-size:19.5px;letter-spacing:-0.406px;left:229.50px;">Oven</div>
<div class="t c" style="top:944.39px;font-size:19.5px;letter-spacing:0.991px;right:868.01px;">$1,099.99</div>
<div class="t c" style="top:974.39px;font-size:19.5px;letter-spacing:1.114px;right:1310.39px;">446741</div>
<div class="t c" style="top:974.39px;font-size:19.5px;letter-spacing:0.285px;left:229.50px;">Washer</div>
<div class="t c" style="top:974.39px;font-size:19.5px;letter-spacing:1.052px;right:867.95px;">$467.99</div>
<div class="t c" style="top:1004.39px;font-size:19.5px;letter-spacing:1.114px;right:1310.39px;">643081</div>
<div class="t c" style="top:1004.39px;font-size:19.5px;letter-spacing:0.580px;left:229.50px;">Dryer</div>
<div class="t c" style="top:1004.39px;font-size:19.5px;letter-spacing:1.052px;right:867.95px;">$599.99</div>
<div class="t c" style="top:854.39px;font-size:19.5px;letter-spacing:0.330px;left:907.50px;">Number of Orders</div>
<div class="t c" style="top:884.39px;font-size:19.5px;letter-spacing:0.578px;left:907.50px;">Lowest Monthly Payment</div>
<div class="t c" style="top:914.39px;font-size:19.5px;letter-spacing:0.347px;left:907.50px;">Average Monthly Payment</div>
<div class="t c" style="top:944.39px;font-size:19.5px;letter-spacing:0.769px;left:907.50px;">Maximum Monthly Payment</div>
<div class="t c" style="top:974.39px;font-size:19.5px;letter-spacing:0.641px;left:907.50px;">Median Monthly Payment</div>
<div class="t c" style="top:1064.39px;font-size:19.5px;letter-spacing:-0.015px;left:47.50px;">Delivery Fee</div>
<div class="t c" style="top:1064.39px;font-size:19.5px;letter-spacing:1.078px;right:1028.42px;">$75.00</div>
<div class="t c" style="top:1094.39px;font-size:19.5px;letter-spacing:0.262px;left:47.50px;">Interest Rate</div>
<div class="t c" style="top:1094.39px;font-size:19.5px;letter-spacing:0.636px;right:1028.86px;">3.25%</div>
<div class="t c" style="top:1124.39px;font-size:19.5px;letter-spacing:0.130px;left:47.50px;">Months Per Year</div>
<div class="t c" style="top:1124.39px;font-size:19.5px;letter-spacing:1.836px;right:1027.66px;">12</div>
<div class="t h" style="top:275.12px;font-size:20.3px;left:131.00px;width:0;display:flex;justify-content:center;"><span>A</span></div>
<div class="t h" style="top:275.12px;font-size:20.3px;left:360.00px;width:0;display:flex;justify-content:center;"><span>B</span></div>
<div class="t h" style="top:275.12px;font-size:20.3px;left:581.00px;width:0;display:flex;justify-content:center;"><span>C</span></div>
<div class="t h" style="top:275.12px;font-size:20.3px;left:714.00px;width:0;display:flex;justify-content:center;"><span>D</span></div>
<div class="t h" style="top:275.12px;font-size:20.3px;left:835.00px;width:0;display:flex;justify-content:center;"><span>E</span></div>
<div class="t h" style="top:275.12px;font-size:20.3px;left:971.00px;width:0;display:flex;justify-content:center;"><span>F</span></div>
<div class="t h" style="top:275.12px;font-size:20.3px;left:1107.00px;width:0;display:flex;justify-content:center;"><span>G</span></div>
<div class="t h" style="top:275.12px;font-size:20.3px;left:1273.00px;width:0;display:flex;justify-content:center;"><span>H</span></div>
<div class="t h" style="top:275.12px;font-size:20.3px;left:1468.00px;width:0;display:flex;justify-content:center;"><span>I</span></div>
<div class="t h" style="top:335.04px;font-size:19.8px;left:20.00px;width:0;display:flex;justify-content:center;"><span>1</span></div>
<div class="t h" style="top:370.14px;font-size:19.8px;left:20.00px;width:0;display:flex;justify-content:center;"><span>2</span></div>
<div class="t h" style="top:400.14px;font-size:19.8px;left:20.00px;width:0;display:flex;justify-content:center;"><span>3</span></div>
<div class="t h" style="top:432.14px;font-size:19.8px;left:20.00px;width:0;display:flex;justify-content:center;"><span>4</span></div>
<div class="t h" style="top:462.14px;font-size:19.8px;left:20.00px;width:0;display:flex;justify-content:center;"><span>5</span></div>
<div class="t h" style="top:491.44px;font-size:19.8px;left:20.00px;width:0;display:flex;justify-content:center;"><span>6</span></div>
<div class="t h" style="top:528.14px;font-size:19.8px;left:20.00px;width:0;display:flex;justify-content:center;"><span>7</span></div>
<div class="t h" style="top:558.14px;font-size:19.8px;left:20.00px;width:0;display:flex;justify-content:center;"><span>8</span></div>
<div class="t h" style="top:588.14px;font-size:19.8px;left:20.00px;width:0;display:flex;justify-content:center;"><span>9</span></div>
<div class="t h" style="top:618.14px;font-size:19.8px;left:20.00px;width:0;display:flex;justify-content:center;"><span>10</span></div>
<div class="t h" style="top:648.14px;font-size:19.8px;left:20.00px;width:0;display:flex;justify-content:center;"><span>11</span></div>
<div class="t h" style="top:678.14px;font-size:19.8px;left:20.00px;width:0;display:flex;justify-content:center;"><span>12</span></div>
<div class="t h" style="top:708.14px;font-size:19.8px;left:20.00px;width:0;display:flex;justify-content:center;"><span>13</span></div>
<div class="t h" style="top:738.14px;font-size:19.8px;left:20.00px;width:0;display:flex;justify-content:center;"><span>14</span></div>
<div class="t h" style="top:768.14px;font-size:19.8px;left:20.00px;width:0;display:flex;justify-content:center;"><span>15</span></div>
<div class="t h" style="top:796.14px;font-size:19.8px;left:20.00px;width:0;display:flex;justify-content:center;"><span>16</span></div>
<div class="t h" style="top:824.14px;font-size:19.8px;left:20.00px;width:0;display:flex;justify-content:center;"><span>17</span></div>
<div class="t h" style="top:854.14px;font-size:19.8px;left:20.00px;width:0;display:flex;justify-content:center;"><span>18</span></div>
<div class="t h" style="top:884.14px;font-size:19.8px;left:20.00px;width:0;display:flex;justify-content:center;"><span>19</span></div>
<div class="t h" style="top:914.14px;font-size:19.8px;left:20.00px;width:0;display:flex;justify-content:center;"><span>20</span></div>
<div class="t h" style="top:944.14px;font-size:19.8px;left:20.00px;width:0;display:flex;justify-content:center;"><span>21</span></div>
<div class="t h" style="top:974.14px;font-size:19.8px;left:20.00px;width:0;display:flex;justify-content:center;"><span>22</span></div>
<div class="t h" style="top:1004.14px;font-size:19.8px;left:20.00px;width:0;display:flex;justify-content:center;"><span>23</span></div>
<div class="t h" style="top:1034.14px;font-size:19.8px;left:20.00px;width:0;display:flex;justify-content:center;"><span>24</span></div>
<div class="t h" style="top:1064.14px;font-size:19.8px;left:20.00px;width:0;display:flex;justify-content:center;"><span>25</span></div>
<div class="t h" style="top:1094.14px;font-size:19.8px;left:20.00px;width:0;display:flex;justify-content:center;"><span>26</span></div>
<div class="t h" style="top:1124.14px;font-size:19.8px;left:20.00px;width:0;display:flex;justify-content:center;"><span>27</span></div>
<div class="t h" style="top:1154.14px;font-size:19.8px;left:20.00px;width:0;display:flex;justify-content:center;"><span>28</span></div>
<div class="t h" style="top:1184.14px;font-size:19.8px;left:20.00px;width:0;display:flex;justify-content:center;"><span>29</span></div>
<div class="t h" style="top:1214.14px;font-size:19.8px;left:20.00px;width:0;display:flex;justify-content:center;"><span>30</span></div>
<div class="t h" style="top:1244.14px;font-size:19.8px;left:20.00px;width:0;display:flex;justify-content:center;"><span>31</span></div>
<div class="t tab" style="top:11.57px;font-size:26.5px;letter-spacing:1.120px;left:19.70px;color:#e8e8e8;-webkit-text-stroke:0.5px #e8e8e8;">Home</div>
<div class="t tab" style="top:12.84px;font-size:25px;letter-spacing:0.922px;left:142.30px;">Insert</div>
<div class="t tab" style="top:12.84px;font-size:25px;letter-spacing:0.850px;left:264.00px;">Draw</div>
<div class="t tab" style="top:12.84px;font-size:25px;letter-spacing:0.364px;left:376.70px;">Page Layout</div>
<div class="t tab" style="top:12.84px;font-size:25px;letter-spacing:0.310px;left:580.30px;">Formulas</div>
<div class="t tab" style="top:12.84px;font-size:25px;letter-spacing:1.167px;left:746.00px;">Data</div>
<div class="t tab" style="top:12.84px;font-size:25px;letter-spacing:0.507px;left:850.30px;">Review</div>
<div class="t tab" style="top:12.84px;font-size:25px;letter-spacing:1.489px;left:986.00px;">View</div>
<div class="t tab" style="top:12.84px;font-size:25px;letter-spacing:0.566px;left:1124.30px;">Tell me</div>
<div class="t ui" style="top:85.38px;font-size:24px;letter-spacing:0.778px;left:239.00px;">Calibri (Body)</div>
<div class="t ui" style="top:85.38px;font-size:24px;letter-spacing:-1.800px;left:525.50px;">11</div>
<div class="t ui" style="top:85.38px;font-size:24px;letter-spacing:0.351px;left:1033.50px;">General</div>
<div class="t ui" style="top:144.57px;font-size:20px;letter-spacing:1.087px;left:38.00px;">Paste</div>
<div class="t ui" style="top:219.14px;font-size:25px;letter-spacing:-1.800px;left:18.00px;color:#dcdcdc;">F5</div>
<div class="t ui" style="top:75.68px;font-size:22px;letter-spacing:0.042px;left:1424.00px;">Conditional</div>
<div class="t ui" style="top:119.68px;font-size:22px;letter-spacing:-0.003px;left:1424.00px;">Format as</div>
<div class="t ui" style="top:163.68px;font-size:22px;letter-spacing:-0.043px;left:1424.00px;">Cell Styles</div>
<div class="t uib" style="top:148.41px;font-size:25.5px;left:244.60px;transform:scaleX(0.9);transform-origin:0 0;">B</div>
<div class="t ser" style="top:146.30px;font-size:28px;left:298.00px;color:#d4d4d4;">I</div>
<div class="t ic" style="top:147.84px;font-size:25px;left:345.50px;">U</div>
<div class="t ic" style="top:142.93px;font-size:36px;left:1035.80px;transform:scaleX(0.84);transform-origin:0 0;">$</div>
<div class="t ic" style="top:143.18px;font-size:37px;left:1105.50px;">%</div>
<div class="t ser" style="top:213.22px;font-size:34px;letter-spacing:2.500px;left:312.50px;color:#8f8f8f;font-weight:bold;">fx</div>
<div class="t ic" style="top:78.16px;font-size:35.6px;left:635.90px;transform:scaleX(0.91);transform-origin:0 0;">A</div>
<div class="t ic" style="top:83.99px;font-size:28.6px;left:690.80px;transform:scaleX(0.95);transform-origin:0 0;">A</div>
<div class="t ic" style="top:141.96px;font-size:31px;left:634.70px;transform:scaleX(0.93);transform-origin:0 0;">A</div>
<div class="t ic" style="top:67.47px;font-size:21.3px;left:922.30px;">ab</div>
<div class="t ic" style="top:82.27px;font-size:21.3px;left:922.50px;">c</div>
<div class="t ic" style="top:163.22px;font-size:21px;left:906.50px;transform:rotate(-45deg);transform-origin:0 100%;">ab</div>
<div class="t ic" style="top:144.96px;font-size:18px;left:1260.50px;">0</div>
<div class="t ic" style="top:160.96px;font-size:18px;left:1244.50px;">.00</div>
<div class="t ic" style="top:144.96px;font-size:18px;left:1296.50px;">.00</div>
<div class="t ic" style="top:160.96px;font-size:18px;left:1306.50px;">.0</div>
</body></html>
